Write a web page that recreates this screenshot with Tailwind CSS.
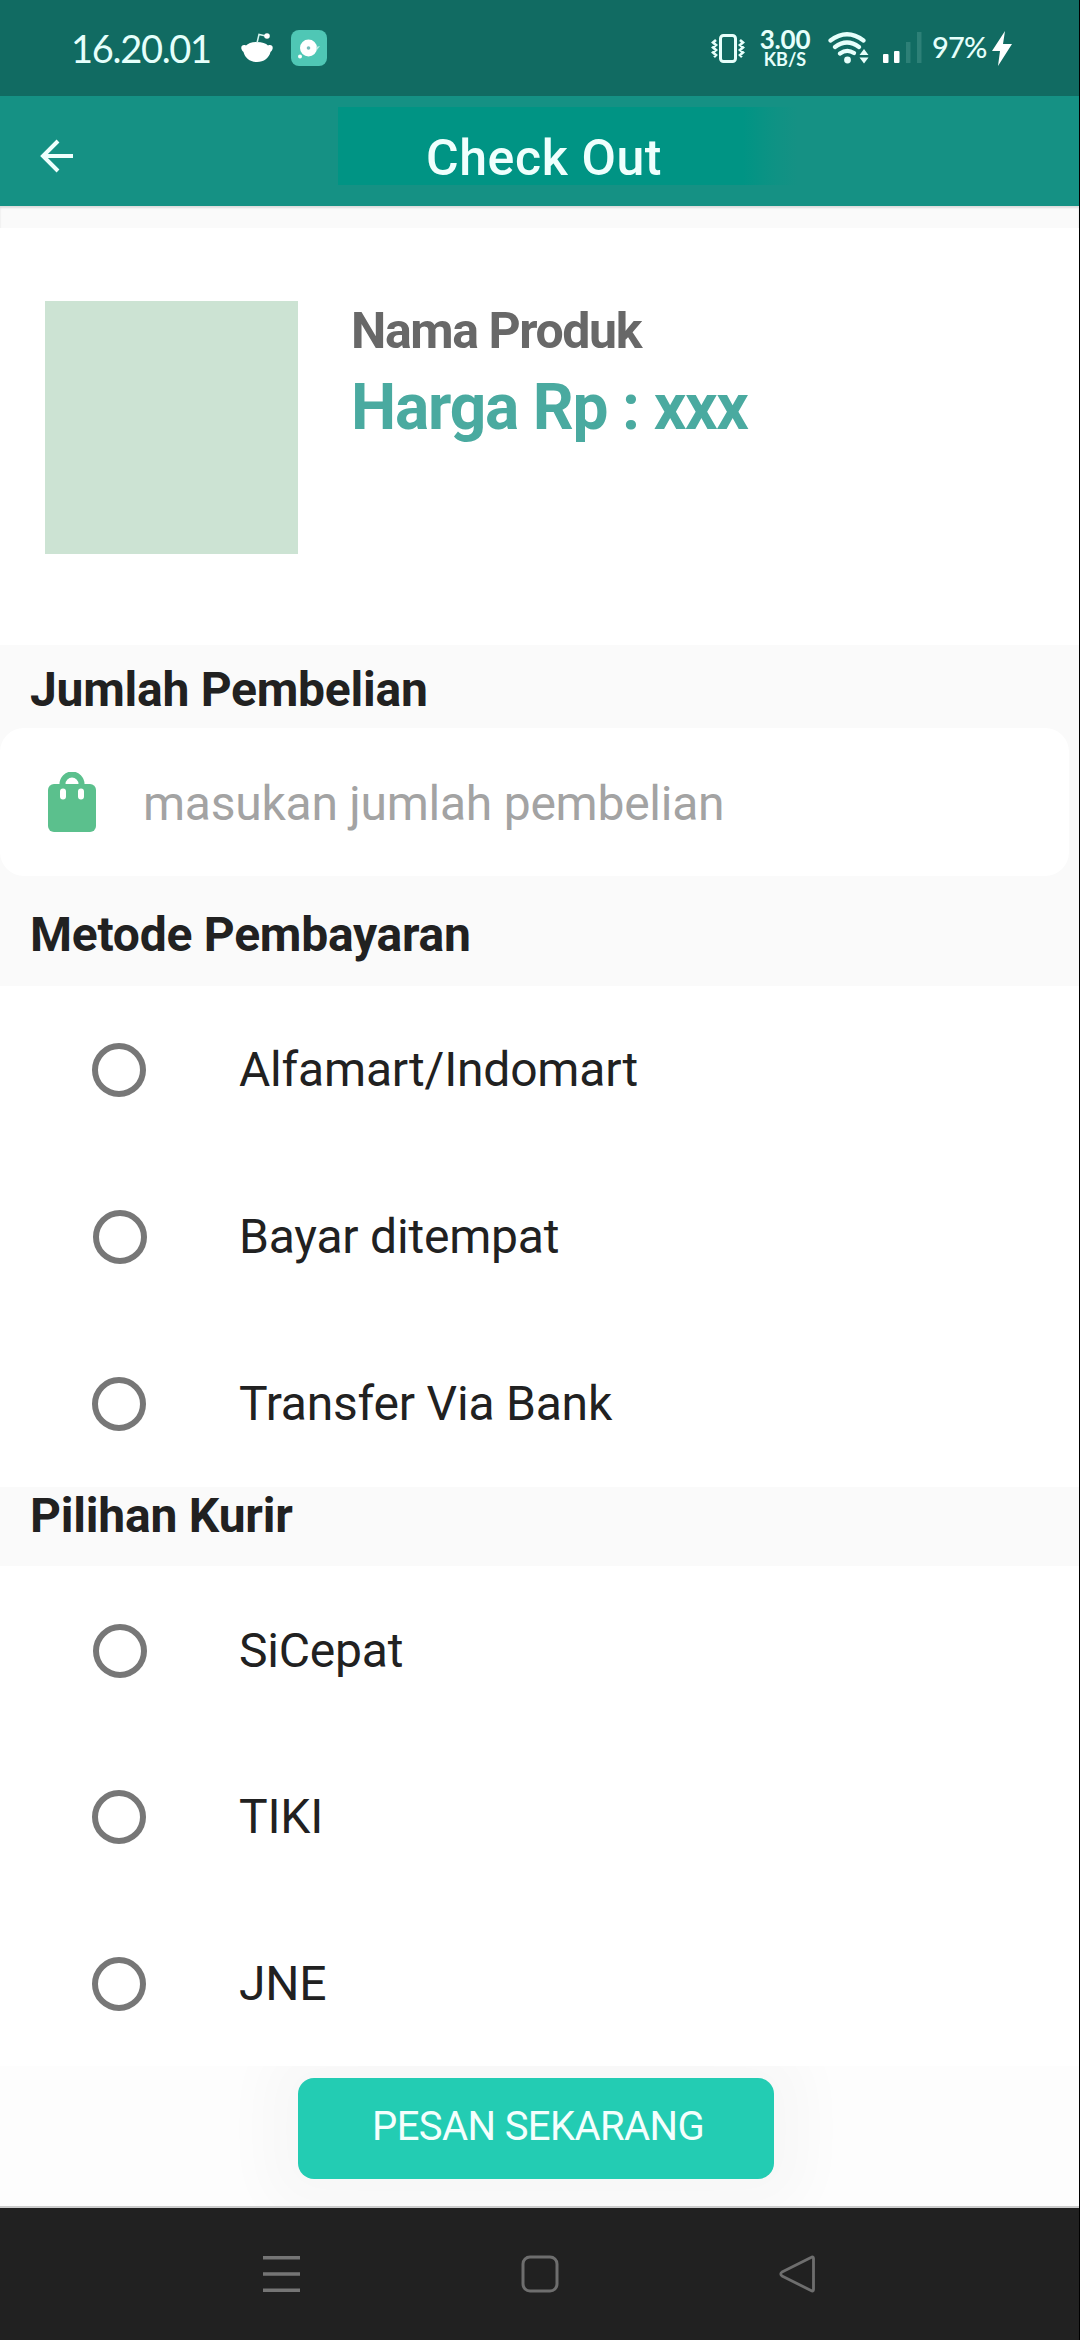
<!DOCTYPE html>
<html lang="id">
<head>
<meta charset="utf-8">
<title>Check Out</title>
<script src="https://cdn.jsdelivr.net/npm/@tailwindcss/browser@4"></script>
</head>
<body class="w-[1080px] h-[2340px] overflow-hidden bg-black font-[Roboto,sans-serif] text-[#212121]">
<div class="flex flex-col w-[1079px] h-[2340px] bg-white overflow-hidden">

  <!-- Status bar -->
  <div class="h-24 shrink-0 bg-[#116b62] flex items-start text-[#e6fffb] font-[Lato,sans-serif]">
    <div class="ml-[71px] mt-[24px] w-[140px] text-[38px] leading-[48px] tracking-[-1.3px] whitespace-nowrap">16.20.01</div>
    <svg class="ml-[29px] mt-[32px]" width="34" height="32" viewBox="0 0 34 32">
      <path d="M17 10C22 10 26 11.500 28 13.500C31 12 33.500 14 32.500 17C32 19 31 19.500 30.500 20C29 26 24 30 17 30S5 26 3.500 20C3 19.500 2 19 1.500 17C.5 14 3 12 6 13.500C8 11.500 12 10 17 10Z" fill="#fff"/>
      <path d="M17 11L19 2.500L26 4" fill="none" stroke="#d6f5f0" stroke-width="1.500"/>
      <circle cx="27" cy="4" r="2.800" fill="#fff"/>
    </svg>
    <svg class="ml-[17px] mt-[30px]" width="36" height="36" viewBox="0 0 36 36">
      <rect width="36" height="36" rx="8" fill="#4fc7b5"/>
      <circle cx="17.500" cy="18" r="8.500" fill="#fff"/><circle cx="17.500" cy="18" r="1.800" fill="#7bb"/>
      <circle cx="9" cy="26.500" r="2" fill="#fff"/><path d="M25 17L29 16L26 20Z" fill="#b9eee5"/>
    </svg>
    <svg class="ml-[384px] mt-[33px]" width="34" height="31" viewBox="0 0 34 31" fill="none" stroke="#e6fffb">
      <rect x="9.500" y="2.500" width="15" height="26" rx="3" stroke-width="3"/>
      <path d="M5 7L2 9.500L5 12L2 14.500L5 17L2 19.500L5 22L3 24M29 7L32 9.500L29 12L32 14.500L29 17L32 19.500L29 22L31 24" stroke-width="2.600"/>
    </svg>
    <div class="ml-[13px] mt-[25px] w-[54px] text-center font-bold">
      <div class="text-[26px] leading-[29px] tracking-[-0.2px]">3.00</div>
      <div class="text-[18px] leading-[10px]">KB/S</div>
    </div>
    <svg class="ml-[16px] mt-[32px]" width="42" height="32" viewBox="0 0 42 32" fill="none" stroke="#e6fffb" stroke-width="4.200" stroke-linecap="round">
      <path d="M2.500 8.500Q19 -4 35.500 8.500M7 15Q19 6 31 15M12 21.500Q19 16.500 26 21"/>
      <circle cx="19.500" cy="28" r="3.400" fill="#e6fffb" stroke="none"/>
      <path d="M31.500 23L36 17L40.500 23ZM31.500 25.500L36 31.500L40.500 25.500Z" fill="#e6fffb" stroke="none"/>
    </svg>
    <svg class="ml-[12px] mt-[32px]" width="40" height="31" viewBox="0 0 40 31">
      <rect x="1" y="22" width="5.500" height="9" rx="1" fill="#fff"/><rect x="12" y="19" width="5.500" height="12" rx="1" fill="#fff"/>
      <rect x="24" y="10" width="4.500" height="21" fill="#2d8077"/><rect x="35" y="0" width="4.500" height="31" fill="#2d8077"/>
    </svg>
    <div class="ml-[10px] mt-[31px] w-[55px] text-[29px] leading-[32px] tracking-[-0.8px] font-medium whitespace-nowrap">97%</div>
    <svg class="ml-[5px] mt-[31px]" width="20" height="35" viewBox="0 0 20 35"><path d="M13 0L0 20H8L6 35L20 13H11Z" fill="#fff"/></svg>
  </div>

  <!-- App bar -->
  <header class="h-[110px] shrink-0 bg-[#159184] flex items-start">
    <svg class="ml-[40px] mt-[43px]" width="34" height="34" viewBox="0 0 34 34" fill="none" stroke="#effffd" stroke-width="4"><path d="M33 17H4M18 2L3 17L18 32"/></svg>
    <div class="ml-[264px] mt-[11px] w-[460px] h-[78px] bg-linear-to-r from-[#009484] from-[88%] to-[#159184] to-[100%] flex items-start">
      <h1 class="ml-[88px] mt-[21px] text-[50px] leading-[60px] tracking-[0.6px] font-medium text-[#effffd] whitespace-nowrap">Check Out</h1>
    </div>
  </header>
  <div class="h-[22px] shrink-0 bg-[#fafafa] shadow-[inset_0_2px_2px_#ddd]"></div>

  <!-- Product -->
  <section class="h-[417px] shrink-0 flex items-start">
    <div class="ml-[45px] mt-[73px] size-[253px] bg-[#cce3d3]"></div>
    <div class="ml-[53px] mt-[73px]">
      <div class="text-[50px] leading-[60px] tracking-[-1.4px] font-bold text-[#686868] whitespace-nowrap">Nama Produk</div>
      <div class="text-[64px] leading-[76px] mt-[9px] tracking-[-1.2px] font-bold text-[#4aaaa0] whitespace-nowrap">Harga Rp : xxx</div>
    </div>
  </section>

  <!-- Quantity -->
  <section class="h-[341px] shrink-0 bg-[#fafafa] flex flex-col tracking-[-0.25px]">
    <h2 class="h-[83px] pl-[30px] pt-[17px] text-[48px] leading-[56px] font-bold whitespace-nowrap">Jumlah Pembelian</h2>
    <div class="h-[148px] w-[1069px] bg-white rounded-[24px] flex items-start">
      <svg class="ml-[47px] mt-[44px]" width="50" height="61" viewBox="0 0 50 61">
        <rect x="1" y="12" width="48" height="48" rx="6" fill="#5bc08d"/>
        <path d="M15.500 14V12a9.500 9.500 0 0 1 19 0V14" fill="none" stroke="#5bc08d" stroke-width="6"/>
        <path d="M16 19.500V24.500M34 19.500V24.500" stroke="#fff" stroke-width="6" stroke-linecap="round"/>
      </svg>
      <div class="ml-[46px] mt-[48px] text-[48px] leading-[56px] text-[#a3a3a3] whitespace-nowrap">masukan jumlah pembelian</div>
    </div>
    <h2 class="pl-[30px] pt-[31px] text-[48px] leading-[56px] font-bold whitespace-nowrap">Metode Pembayaran</h2>
  </section>

  <!-- Payment methods -->
  <section class="h-[501px] shrink-0 flex flex-col tracking-[-0.2px]">
    <label class="h-[167px] flex items-center pl-[92px]"><span class="size-[54px] rounded-full border-[6px] border-[#777]"></span><span class="ml-[93px] pt-px text-[48px] leading-[56px] whitespace-nowrap">Alfamart/Indomart</span></label>
    <label class="h-[167px] flex items-center pl-[93px]"><span class="size-[54px] rounded-full border-[6px] border-[#777]"></span><span class="ml-[92px] pt-px text-[48px] leading-[56px] whitespace-nowrap">Bayar ditempat</span></label>
    <label class="h-[167px] flex items-center pl-[92px]"><span class="size-[54px] rounded-full border-[6px] border-[#777]"></span><span class="ml-[93px] pt-px text-[48px] leading-[56px] whitespace-nowrap">Transfer Via Bank</span></label>
  </section>

  <!-- Couriers -->
  <h2 class="h-[79px] shrink-0 bg-[#fafafa] pl-[30px] pt-px text-[48px] leading-[56px] tracking-[-0.2px] font-bold whitespace-nowrap">Pilihan Kurir</h2>
  <section class="h-[500px] shrink-0 flex flex-col tracking-[-0.2px]">
    <label class="h-[167px] flex items-center pt-[2px] pl-[93px]"><span class="size-[54px] rounded-full border-[6px] border-[#777]"></span><span class="ml-[92px] text-[48px] leading-[56px] whitespace-nowrap">SiCepat</span></label>
    <label class="h-[167px] flex items-center pt-px pl-[92px]"><span class="size-[54px] rounded-full border-[6px] border-[#777]"></span><span class="ml-[93px] text-[48px] leading-[56px] whitespace-nowrap">TIKI</span></label>
    <label class="h-[166px] flex items-center pt-[2px] pl-[92px]"><span class="size-[54px] rounded-full border-[6px] border-[#777]"></span><span class="ml-[93px] text-[48px] leading-[56px] whitespace-nowrap">JNE</span></label>
  </section>

  <!-- Order button -->
  <div class="h-[142px] shrink-0 bg-[#fdfdfd] overflow-hidden border-b-2 border-[#ccc]">
    <div class="ml-[298px] mt-[12px] w-[476px] h-[101px] rounded-[16px] bg-[#23ccb3] shadow-[0_0_50px_35px_rgba(0,0,0,0.025)] pl-[74px] pt-[25px] text-[40px] leading-[48px] tracking-[-0.6px] text-[#f4fffd] whitespace-nowrap">PESAN SEKARANG</div>
  </div>

  <!-- Navigation bar -->
  <nav class="h-[132px] shrink-0 bg-[#212121] flex items-start pt-[46px]">
    <svg class="ml-[263px]" width="38" height="40" viewBox="0 0 38 40" stroke="#757575" stroke-width="3.600"><path d="M0 3.800H37M0 20H37M0 36.300H37"/></svg>
    <svg class="ml-[219px]" width="40" height="40" viewBox="0 0 40 40" fill="none" stroke="#6e6e6e" stroke-width="3"><rect x="3" y="3" width="34" height="34" rx="7"/></svg>
    <svg class="ml-[219px]" width="38" height="40" viewBox="0 0 38 40" fill="none" stroke="#6e6e6e" stroke-width="2.800" stroke-linejoin="round"><path d="M34.500 4.500V35.500Q34.500 38 32 36.500L3 22Q.5 20 3 18L32 3.500Q34.500 2 34.500 4.500Z"/></svg>
  </nav>
</div>
</body>
</html>
